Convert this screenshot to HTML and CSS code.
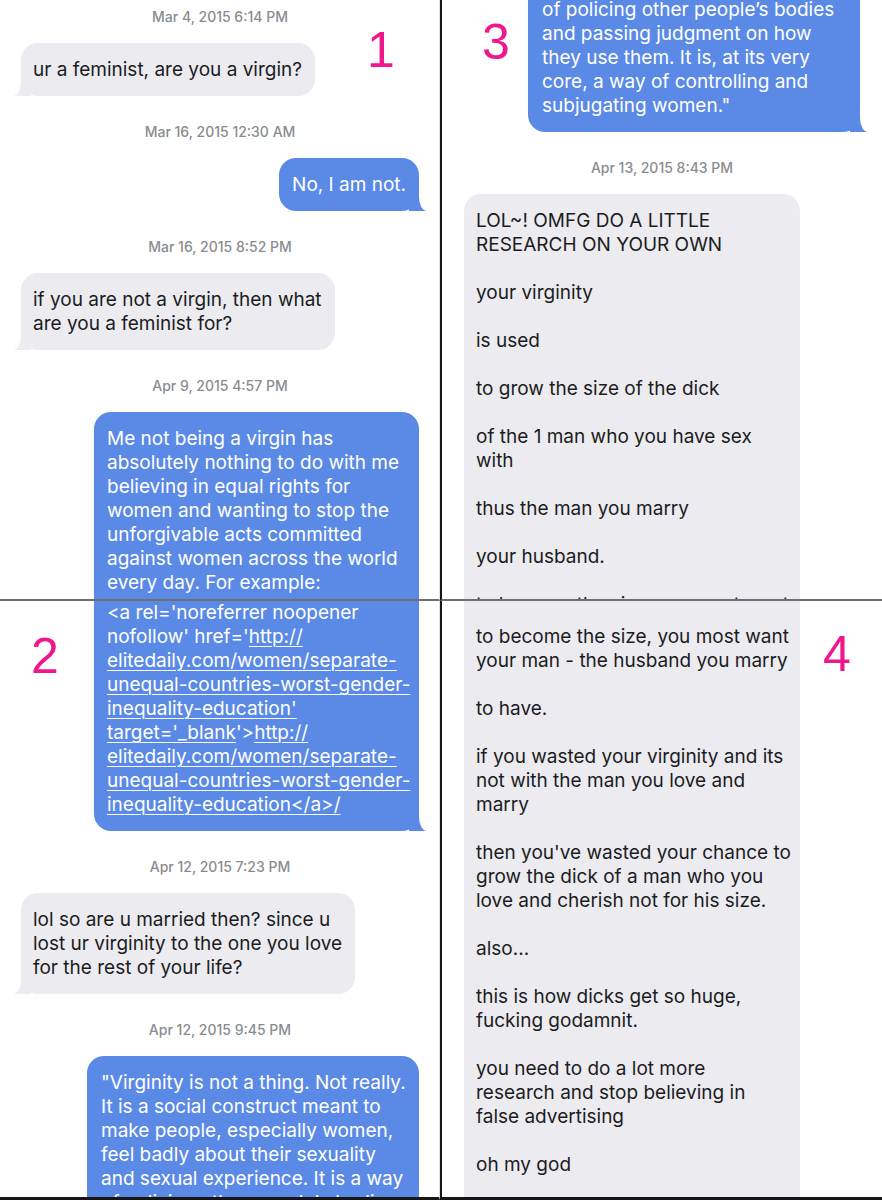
FILE: index.html
```html
<!DOCTYPE html>
<html lang="en">
<head>
<meta charset="utf-8">
<title>Messages</title>
<link rel="stylesheet" href="styles.css">
</head>
<body>
<main class="collage">
  <section class="panel panel-top panel-left">
    <span class="label label-1">1</span>
    <div class="chat">
      <p class="stamp">Mar 4, 2015 6:14 PM</p>
      <div class="bubble in tail">ur a feminist, are you a virgin?</div>
      <p class="stamp">Mar 16, 2015 12:30 AM</p>
      <div class="bubble out tail">No, I am not.</div>
      <p class="stamp">Mar 16, 2015 8:52 PM</p>
      <div class="bubble in tail">if you are not a virgin, then what<br>are you a feminist for?</div>
      <p class="stamp">Apr 9, 2015 4:57 PM</p>
      <div class="bubble out wide-link cut-bottom">Me not being a virgin has<br>absolutely nothing to do with me<br>believing in equal rights for<br>women and wanting to stop the<br>unforgivable acts committed<br>against women across the world<br>every day. For example:</div>
    </div>
  </section>

  <section class="panel panel-top panel-right">
    <span class="label label-3">3</span>
    <div class="chat">
      <div class="bubble out wide-quote tail cut-top nudge">of policing other people’s bodies<br>and passing judgment on how<br>they use them. It is, at its very<br>core, a way of controlling and<br>subjugating women."</div>
      <p class="stamp">Apr 13, 2015 8:43 PM</p>
      <div class="bubble in wide-in cut-bottom">LOL~! OMFG DO A LITTLE<br>RESEARCH ON YOUR OWN<br><br>your virginity<br><br>is used<br><br>to grow the size of the dick<br><br>of the 1 man who you have sex<br>with<br><br>thus the man you marry<br><br>your husband.<br><br>to become the size, you most want</div>
    </div>
  </section>

  <section class="panel panel-bottom panel-left">
    <span class="label label-2">2</span>
    <div class="chat">
      <div class="bubble out wide-link tail cut-top">&lt;a rel='noreferrer noopener<br>nofollow' href='<span class="link">http://</span><br><span class="link">elitedaily.com/women/separate-</span><br><span class="link">unequal-countries-worst-gender-</span><br><span class="link">inequality-education'</span><br><span class="link">target='_blank</span>'&gt;<span class="link">http://</span><br><span class="link">elitedaily.com/women/separate-</span><br><span class="link">unequal-countries-worst-gender-</span><br><span class="link">inequality-education&lt;/a&gt;/</span></div>
      <p class="stamp">Apr 12, 2015 7:23 PM</p>
      <div class="bubble in tail">lol so are u married then? since u<br>lost ur virginity to the one you love<br>for the rest of your life?</div>
      <p class="stamp">Apr 12, 2015 9:45 PM</p>
      <div class="bubble out wide-quote cut-bottom">"Virginity is not a thing. Not really.<br>It is a social construct meant to<br>make people, especially women,<br>feel badly about their sexuality<br>and sexual experience. It is a way<br>of policing other people's bodies</div>
    </div>
  </section>

  <section class="panel panel-bottom panel-right">
    <span class="label label-4">4</span>
    <div class="chat">
      <div class="bubble in wide-in cut-top cut-bottom"><br>to become the size, you most want<br>your man - the husband you marry<br><br>to have.<br><br>if you wasted your virginity and its<br>not with the man you love and<br>marry<br><br>then you've wasted your chance to<br>grow the dick of a man who you<br>love and cherish not for his size.<br><br>also...<br><br>this is how dicks get so huge,<br>fucking godamnit.<br><br>you need to do a lot more<br>research and stop believing in<br>false advertising<br><br>oh my god</div>
    </div>
  </section>
</main>
</body>
</html>
```

FILE: styles.css
```css
* {
  box-sizing: border-box;
}

html,
body {
  margin: 0;
  padding: 0;
  background: #ffffff;
}

body {
  font-family: Inter, "Liberation Sans", Arial, sans-serif;
}

.collage {
  display: grid;
  grid-template-columns: 440px 442px;
  grid-template-rows: 601px 599px;
  width: 882px;
  height: 1200px;
}

.panel {
  position: relative;
  overflow: hidden;
  background: #ffffff;
}

.panel-top {
  border-bottom: 2px solid #6f6f6f;
}

.panel-bottom {
  border-bottom: 3px solid #161616;
}

.panel-left {
  border-right: 1px solid #e1e1e4;
}

.panel-right {
  border-left: 2px solid #161616;
}

.chat {
  display: flex;
  flex-direction: column;
  padding: 0 20px 0 21px;
}

.panel-right .chat {
  padding: 0 22px;
}

.stamp {
  margin: 26px 0 16px;
  text-align: center;
  font-size: 14px;
  line-height: 20px;
  font-weight: 500;
  color: #898c91;
}

.stamp:first-child {
  margin-top: 7px;
}

.bubble {
  position: relative;
  padding: 15px 13px 14px;
  border-radius: 17px;
  font-size: 19px;
  line-height: 24px;
  white-space: nowrap;
}

.in {
  align-self: flex-start;
  padding-left: 12px;
  background: #ebebf0;
  color: #1c1c1e;
}

.out {
  align-self: flex-end;
  background: #5b8ae6;
  color: #ffffff;
}

/* messages split across two screenshots keep the width of the whole message */
.wide-in {
  width: 336px;
}

.wide-link {
  width: 325px;
}

.wide-quote {
  width: 332px;
  padding-left: 14px;
}

.cut-top {
  padding-top: 0;
  border-top-left-radius: 0;
  border-top-right-radius: 0;
}

.cut-bottom {
  padding-bottom: 60px;
}

.nudge {
  margin-top: -2px;
}

.link {
  text-decoration: underline;
  text-decoration-thickness: 1px;
  text-underline-offset: 3px;
}

/* bubble tails */
.tail::before,
.tail::after {
  content: "";
  position: absolute;
  bottom: 0;
}

.out.tail::before {
  right: -8px;
  width: 18px;
  height: 20px;
  background: #5b8ae6;
}

.out.tail::after {
  right: -16px;
  width: 16px;
  height: 22px;
  background: #ffffff;
  border-bottom-left-radius: 8px 14px;
}

.in.tail::before {
  left: -8px;
  width: 18px;
  height: 20px;
  background: #ebebf0;
}

.in.tail::after {
  left: -16px;
  width: 16px;
  height: 22px;
  background: #ffffff;
  border-bottom-right-radius: 8px 14px;
}

/* panel numbers drawn over the screenshots */
.label {
  position: absolute;
  z-index: 2;
  font-family: "Liberation Sans", Arial, sans-serif;
  font-size: 50px;
  line-height: 50px;
  color: #f0168e;
}

.label-1 {
  top: 25px;
  left: 367px;
}

.label-3 {
  top: 17px;
  left: 40px;
}

.label-2 {
  top: 30px;
  left: 31px;
}

.label-4 {
  top: 28px;
  left: 381px;
}
```
